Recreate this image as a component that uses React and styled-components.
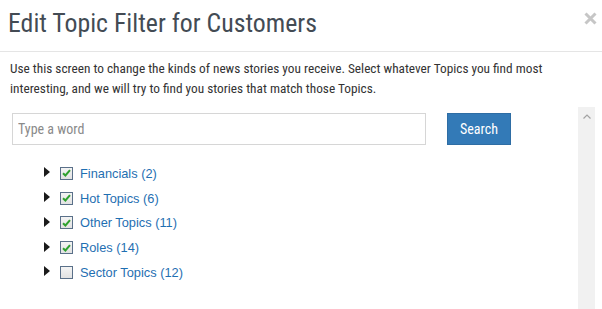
import React from "react";
import styled, { createGlobalStyle } from "styled-components";

const Global = createGlobalStyle`
  html, body { margin: 0; padding: 0; background: #fff; }
  body { font-family: "Roboto Condensed", Roboto, "Liberation Sans", sans-serif; }
`;

const Modal = styled.div`
  width: 602px;
  height: 309px;
  overflow: hidden;
  background: #fff;
  display: flex;
  flex-direction: column;
`;

const Header = styled.div`
  height: 52px;
  box-sizing: border-box;
  border-bottom: 1px solid #e5e5e5;
  display: flex;
  align-items: flex-start;
  justify-content: space-between;
  padding: 5px 5px 0 8px;
`;

const Title = styled.h1`
  margin: 0;
  font-family: "Roboto Condensed", Roboto, sans-serif;
  font-weight: 400;
  font-size: 25.8px;
  line-height: 36px;
  color: #434b54;
`;

const Close = styled.span`
  display: flex;
  margin-top: 7px;
`;

const Body = styled.div`
  flex: 1;
  display: flex;
  flex-direction: column;
  padding: 7px 7px 0 10px;
  min-height: 0;
`;

const Intro = styled.p`
  margin: 0 0 8px 0;
  max-width: 540px;
  font-family: "Roboto Condensed", Roboto, sans-serif;
  font-size: 13.3px;
  line-height: 20px;
  color: #333;
`;

const ScrollArea = styled.div`
  flex: 1;
  display: flex;
  min-height: 0;
`;

const Content = styled.div`
  flex: 1;
  padding: 6px 0 0 2px;
`;

const SearchRow = styled.div`
  display: flex;
  align-items: center;
  gap: 21px;
`;

const Input = styled.input`
  width: 414px;
  height: 32px;
  box-sizing: border-box;
  border: 1px solid #d6d6d6;
  padding: 0 5px;
  font-family: "Roboto Condensed", Roboto, sans-serif;
  font-size: 14px;
  color: #333;
  outline: none;
  &::placeholder { color: #8a8a8a; }
`;

const Button = styled.button`
  width: 64px;
  height: 32px;
  box-sizing: border-box;
  background: #337ab7;
  border: 1px solid #2e6da4;
  color: #fff;
  font-family: "Roboto Condensed", Roboto, sans-serif;
  font-size: 14px;
  padding: 0;
`;

const Tree = styled.ul`
  list-style: none;
  margin: 16px 0 0 0;
  padding: 0 0 0 32px;
`;

const Row = styled.li`
  display: flex;
  align-items: center;
  height: 24.75px;
`;

const Arrow = styled.span`
  width: 0;
  height: 0;
  border-top: 5px solid transparent;
  border-bottom: 5px solid transparent;
  border-left: 6px solid #1b1b1b;
  margin-right: 10px;
  margin-top: -2px;
`;

const Box = styled.span`
  width: 13px;
  height: 13px;
  box-sizing: border-box;
  border: 1px solid #5a7089;
  background: linear-gradient(#f4f4f4, #e2e2e2);
  display: flex;
  align-items: center;
  justify-content: center;
  margin-right: 7px;
`;

const Label = styled.a`
  font-family: "Liberation Sans", Arial, sans-serif;
  font-size: 12.8px;
  color: #1f6fb2;
  text-decoration: none;
`;

const Scrollbar = styled.div`
  width: 17px;
  background: #f1f1f1;
  display: flex;
  justify-content: center;
  padding-top: 7px;
  box-sizing: border-box;
`;

const Check = () => (
  <svg width="9" height="8" viewBox="0 0 9 8">
    <path d="M1 4.2 L3.4 6.5 L8 1.2" fill="none" stroke="#2fa12f" strokeWidth="2" />
  </svg>
);

const Up = () => (
  <svg width="8" height="5" viewBox="0 0 8 5">
    <path d="M0.5 4.5 L4 1 L7.5 4.5" fill="none" stroke="#a3a3a3" strokeWidth="1.2" />
  </svg>
);

const X = () => (
  <svg width="13" height="13" viewBox="0 0 13 13">
    <path d="M1.5 1.5 L11.5 11.5 M11.5 1.5 L1.5 11.5" stroke="#c6c6c6" strokeWidth="3" />
  </svg>
);

const topics = [
  { name: "Financials", count: 2, checked: true },
  { name: "Hot Topics", count: 6, checked: true },
  { name: "Other Topics", count: 11, checked: true },
  { name: "Roles", count: 14, checked: true },
  { name: "Sector Topics", count: 12, checked: false },
];

export default function App() {
  return (
    <>
      <Global />
      <Modal>
        <Header>
          <Title>Edit Topic Filter for Customers</Title>
          <Close>
            <X />
          </Close>
        </Header>
        <Body>
          <Intro>
            Use this screen to change the kinds of news stories you receive. Select whatever Topics you find most
            interesting, and we will try to find you stories that match those Topics.
          </Intro>
          <ScrollArea>
            <Content>
              <SearchRow>
                <Input placeholder="Type a word" />
                <Button>Search</Button>
              </SearchRow>
              <Tree>
                {topics.map((t) => (
                  <Row key={t.name}>
                    <Arrow />
                    <Box>{t.checked && <Check />}</Box>
                    <Label>
                      {t.name} ({t.count})
                    </Label>
                  </Row>
                ))}
              </Tree>
            </Content>
            <Scrollbar>
              <Up />
            </Scrollbar>
          </ScrollArea>
        </Body>
      </Modal>
    </>
  );
}
